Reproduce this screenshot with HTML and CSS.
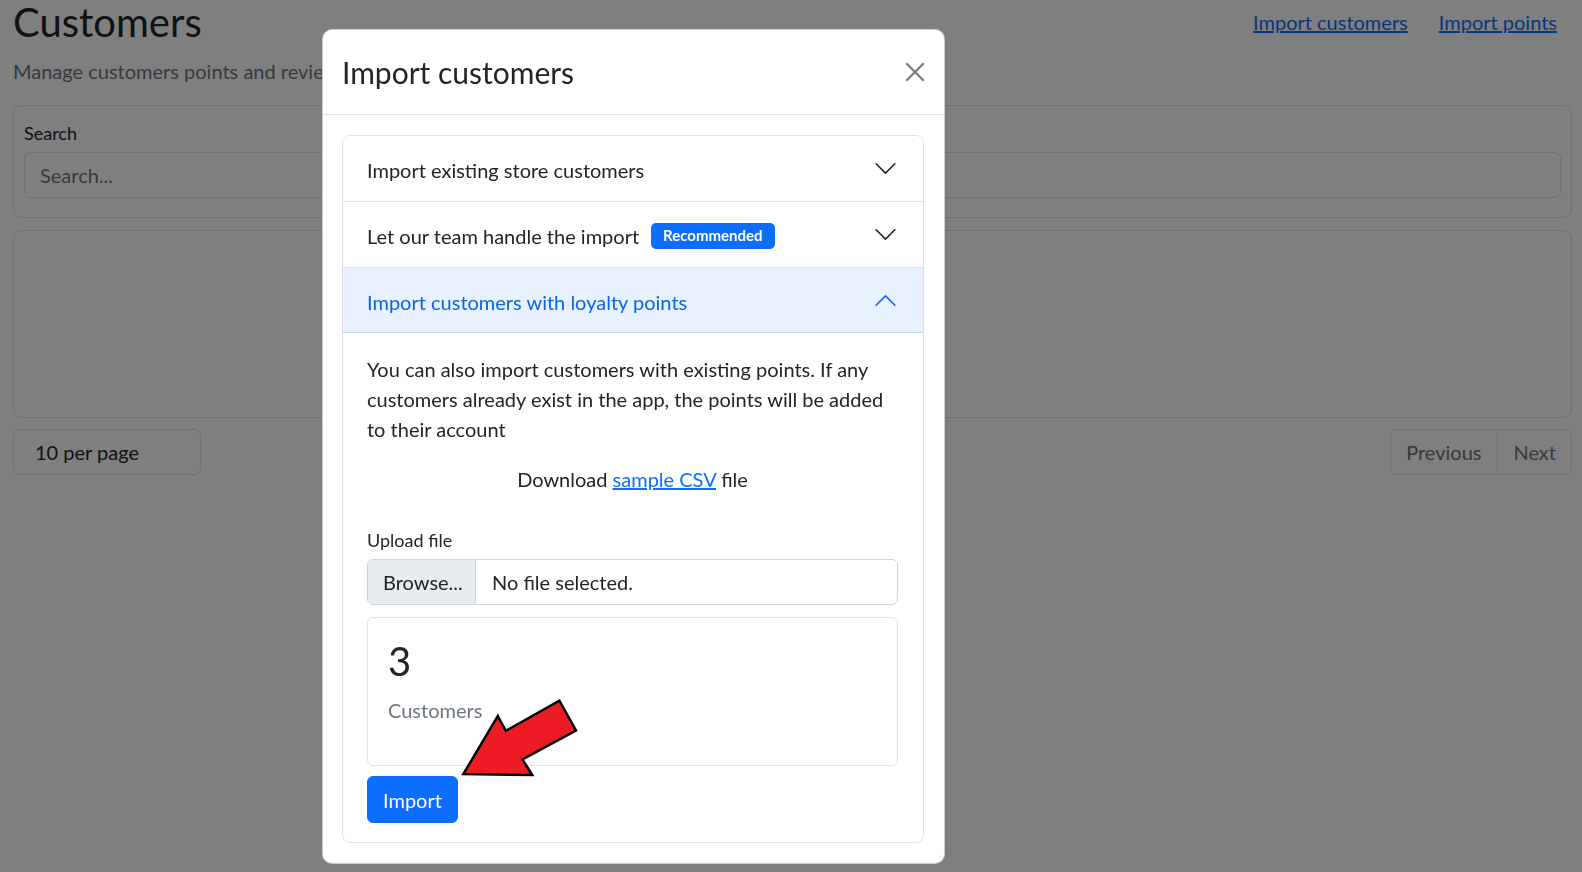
FILE: index.html
```html
<!DOCTYPE html>
<html lang="en">
<head>
<meta charset="utf-8">
<title>Customers</title>
<link rel="stylesheet" href="styles.css">
</head>
<body>
<div class="page">
  <header class="page-head">
    <div class="page-head-text">
      <h1 class="page-title">Customers</h1>
      <p class="page-sub">Manage customers points and reviews</p>
    </div>
    <nav class="head-links">
      <a href="#">Import customers</a>
      <a href="#">Import points</a>
    </nav>
  </header>

  <section class="card search-card">
    <label class="field-label" for="search">Search</label>
    <input class="search-input" id="search" type="text" placeholder="Search...">
  </section>

  <section class="card table-card"></section>

  <div class="pager-row">
    <div class="per-page">10 per page</div>
    <div class="pager">
      <span class="pager-item">Previous</span>
      <span class="pager-item">Next</span>
    </div>
  </div>
</div>

<div class="backdrop"></div>

<div class="modal">
  <div class="modal-dialog">
    <div class="modal-content">
      <div class="modal-header">
        <h4 class="modal-title">Import customers</h4>
        <button class="btn-close" type="button" aria-label="Close">
          <svg viewBox="0 0 16 16" width="20" height="20"><path d="M1 1L15 15M15 1L1 15" stroke="#7a7a7a" stroke-width="1.8" fill="none"/></svg>
        </button>
      </div>
      <div class="modal-body">
        <div class="accordion">
          <div class="acc-item">
            <button class="acc-btn" type="button">
              <span>Import existing store customers</span>
              <svg class="acc-icon" viewBox="0 0 16 16"><path fill="#212529" fill-rule="evenodd" d="M1.646 4.646a.5.5 0 0 1 .708 0L8 10.293l5.646-5.647a.5.5 0 0 1 .708.708l-6 6a.5.5 0 0 1-.708 0l-6-6a.5.5 0 0 1 0-.708z"/></svg>
            </button>
          </div>
          <div class="acc-item">
            <button class="acc-btn" type="button">
              <span>Let our team handle the import</span>
              <span class="badge">Recommended</span>
              <svg class="acc-icon" viewBox="0 0 16 16"><path fill="#212529" fill-rule="evenodd" d="M1.646 4.646a.5.5 0 0 1 .708 0L8 10.293l5.646-5.647a.5.5 0 0 1 .708.708l-6 6a.5.5 0 0 1-.708 0l-6-6a.5.5 0 0 1 0-.708z"/></svg>
            </button>
          </div>
          <div class="acc-item">
            <button class="acc-btn active" type="button">
              <span>Import customers with loyalty points</span>
              <svg class="acc-icon up" viewBox="0 0 16 16"><path fill="#0c63e4" fill-rule="evenodd" d="M1.646 4.646a.5.5 0 0 1 .708 0L8 10.293l5.646-5.647a.5.5 0 0 1 .708.708l-6 6a.5.5 0 0 1-.708 0l-6-6a.5.5 0 0 1 0-.708z"/></svg>
            </button>
            <div class="acc-body">
              <p class="body-text">You can also import customers with existing points. If any customers already exist in the app, the points will be added to their account</p>
              <p class="body-text center">Download <a href="#">sample CSV</a> file</p>
              <div class="upload">
                <label class="field-label upload-label">Upload file</label>
                <div class="file-input">
                  <span class="file-btn">Browse...</span>
                  <span class="file-name">No file selected.</span>
                </div>
              </div>
              <div class="stat-card">
                <div class="stat-num">3</div>
                <p class="stat-label">Customers</p>
              </div>
              <button class="btn-primary" type="button">Import</button>
            </div>
          </div>
        </div>
      </div>
    </div>
  </div>
</div>

<svg class="annotation" width="1582" height="872" viewBox="0 0 1582 872">
  <polygon points="463.4,774 497.8,716 505.8,730.8 559.4,700.7 576,730.5 522.5,759.5 532.2,775" fill="#ed1c24" stroke="#000" stroke-width="2.5" stroke-linejoin="miter"/>
</svg>
</body>
</html>
```

FILE: styles.css
```css
html, body {
  margin: 0;
  padding: 0;
}

body {
  background: #fff;
  color: #212529;
  font-family: Lato, "Liberation Sans", sans-serif;
  font-size: 20px;
  line-height: 30px;
  overflow: hidden;
}

.page {
  padding: 0 10px 0 13px;
}

.page-head {
  display: flex;
  justify-content: space-between;
  align-items: flex-start;
}

.page-title {
  margin: -2px 0 0;
  font-size: 40px;
  line-height: 48px;
  font-weight: 400;
}

.page-sub {
  margin: 10px 0 0;
  color: #6c757d;
}

.head-links {
  display: flex;
  gap: 31px;
  margin: 7px 15px 0 0;
}

.head-links a {
  color: #0d6efd;
  text-decoration: underline;
}

.card {
  background: #fff;
  border: 1px solid #dee2e6;
  border-radius: 8px;
}

.search-card {
  margin-top: 19px;
  padding: 13.5px 10px 19px;
}

.field-label {
  display: block;
  font-size: 18px;
  line-height: 27px;
}

.search-input {
  display: block;
  box-sizing: border-box;
  width: 100%;
  height: 46px;
  margin-top: 5.5px;
  padding: 0 15px;
  border: 1px solid #dee2e6;
  border-radius: 6px;
  font-family: inherit;
  font-size: 20px;
  color: #212529;
  background: #fff;
}

.search-input::placeholder {
  color: #6c757d;
}

.table-card {
  margin-top: 12px;
  height: 188px;
  box-sizing: border-box;
}

.pager-row {
  display: flex;
  justify-content: space-between;
  margin-top: 11px;
}

.per-page {
  box-sizing: border-box;
  width: 188px;
  height: 46px;
  padding: 7px 21px;
  border: 1px solid #dee2e6;
  border-radius: 6px;
  background: #fff;
}

.pager {
  display: flex;
  height: 46px;
  box-sizing: border-box;
  border: 1px solid #dee2e6;
  border-radius: 6px;
  background: #fff;
}

.pager-item {
  padding: 7px 15px;
  color: #6c757d;
}

.pager-item:first-child {
  padding: 7px 16px 7px 15px;
}

.pager-item + .pager-item {
  border-left: 1px solid #dee2e6;
}

.backdrop {
  position: fixed;
  inset: 0;
  background: rgba(0, 0, 0, 0.5);
}

.modal {
  position: fixed;
  inset: 0;
}

.modal-dialog {
  width: 623px;
  margin: 29px 0 0 322px;
}

.modal-content {
  background: #fff;
  border: 1px solid rgba(0, 0, 0, 0.2);
  border-radius: 10px;
}

.modal-header {
  display: flex;
  align-items: center;
  justify-content: space-between;
  padding: 24px 19px 24px 19px;
  border-bottom: 1px solid #dee2e6;
}

.modal-title {
  margin: 0;
  font-size: 30px;
  line-height: 36px;
  font-weight: 400;
}

.btn-close {
  display: block;
  width: 20px;
  height: 20px;
  padding: 0;
  border: 0;
  background: none;
}

.btn-close svg {
  display: block;
}

.modal-body {
  padding: 20px 20px 20px 19px;
}

.accordion {
  border: 1px solid #dee2e6;
  border-radius: 8px;
  overflow: hidden;
}

.acc-item + .acc-item {
  border-top: 1px solid #dee2e6;
}

.acc-btn {
  display: flex;
  align-items: center;
  width: 100%;
  padding: 19px 25px 16px 24px;
  border: 0;
  background: #fff;
  color: #212529;
  font-family: inherit;
  font-size: 20px;
  line-height: 30px;
  text-align: left;
}

.acc-btn.active {
  background: #e7f1ff;
  color: #0c63e4;
  box-shadow: inset 0 -1px 0 rgba(0, 0, 0, 0.125);
}

.acc-icon {
  width: 25px;
  height: 25px;
  margin: 0 0 4px auto;
  flex-shrink: 0;
}

.acc-icon.up {
  transform: rotate(180deg);
}

.badge {
  margin-left: 12px;
  padding: 5px 12px 6px;
  border-radius: 5px;
  background: #0d6efd;
  color: #fff;
  font-size: 15px;
  font-weight: 700;
  line-height: 15px;
}

.acc-body {
  padding: 21px 25px 19px 24px;
}

.body-text {
  margin: 0 0 20px;
}

.center {
  text-align: center;
}

.body-text a {
  color: #0d6efd;
  text-decoration: underline;
}

.upload {
  margin-top: 32.5px;
}

.upload-label {
  margin-bottom: 5.5px;
}

.file-input {
  display: flex;
  box-sizing: border-box;
  height: 46px;
  border: 1px solid #ced4da;
  border-radius: 6px;
  overflow: hidden;
}

.file-btn {
  box-sizing: border-box;
  width: 108px;
  padding: 7px 15px;
  background: #e9ecef;
  border-right: 1px solid #ced4da;
}

.file-name {
  padding: 7px 16px;
}

.stat-card {
  margin-top: 12px;
  padding: 19px 20px 21px;
  border: 1px solid #dee2e6;
  border-radius: 6px;
}

.stat-num {
  font-size: 40px;
  line-height: 48px;
  margin-bottom: 10px;
}

.stat-label {
  margin: 0 0 19px;
  color: #6c757d;
}

.btn-primary {
  display: block;
  margin-top: 10px;
  padding: 7.5px 15px;
  border: 1px solid #0d6efd;
  border-radius: 6px;
  background: #0d6efd;
  color: #fff;
  font-family: inherit;
  font-size: 20px;
  line-height: 30px;
}

.annotation {
  position: fixed;
  left: 0;
  top: 0;
  pointer-events: none;
}
```
